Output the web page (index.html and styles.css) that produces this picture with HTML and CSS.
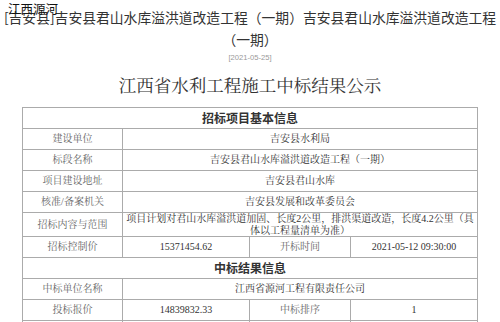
FILE: index.html
```html
<!DOCTYPE html>
<html lang="zh-CN">
<head>
<meta charset="utf-8">
<title>江西省水利工程施工中标结果公示</title>
<link rel="stylesheet" href="styles.css">
</head>
<body>
<div class="mark">江西源河</div>
<h1 class="title">[吉安县]吉安县君山水库溢洪道改造工程（一期）吉安县君山水库溢洪道改造工程（一期）</h1>
<div class="date">[2021-05-25]</div>
<h2 class="heading">江西省水利工程施工中标结果公示</h2>
<table class="info">
  <colgroup>
    <col class="c1"><col class="c2"><col class="c3"><col class="c4">
  </colgroup>
  <tr><td colspan="4" class="sec">招标项目基本信息</td></tr>
  <tr><td class="lab">建设单位</td><td colspan="3" class="val">吉安县水利局</td></tr>
  <tr><td class="lab">标段名称</td><td colspan="3" class="val">吉安县君山水库溢洪道改造工程（一期）</td></tr>
  <tr><td class="lab">项目建设地址</td><td colspan="3" class="val">吉安县君山水库</td></tr>
  <tr><td class="lab">核准/备案机关</td><td colspan="3" class="val">吉安县发展和改革委员会</td></tr>
  <tr class="tall"><td class="lab">招标内容与范围</td><td colspan="3" class="val multi">项目计划对君山水库溢洪道加固、长度2公里，排洪渠道改造，长度4.2公里（具体以工程量清单为准）</td></tr>
  <tr><td class="lab">招标控制价</td><td class="val">15371454.62</td><td class="lab">开标时间</td><td class="val">2021-05-12 09:30:00</td></tr>
  <tr><td colspan="4" class="sec">中标结果信息</td></tr>
  <tr><td class="lab">中标单位名称</td><td colspan="3" class="val">江西省源河工程有限责任公司</td></tr>
  <tr><td class="lab">投标报价</td><td class="val">14839832.33</td><td class="lab">中标排序</td><td class="val">1</td></tr>
  <tr><td class="lab">项目负责人</td><td class="val">张伟</td><td class="lab">中标工期</td><td class="val">365日历天</td></tr>
</table>
</body>
</html>
```
FILE: styles.css
```css
html, body {
  margin: 0;
  padding: 0;
  background: #fff;
}
body {
  position: relative;
  width: 500px;
  color: #333;
  font-family: "Noto Sans CJK SC", "Noto Sans", sans-serif;
  text-spacing-trim: space-all;
}
.mark {
  position: absolute;
  left: 8px;
  top: 1px;
  font-size: 12.5px;
  line-height: 16px;
  color: #111;
  font-family: "Noto Sans CJK SC", sans-serif;
}
.title {
  margin: 7px 0 0;
  font-size: 13.8px;
  font-weight: normal;
  line-height: 21.5px;
  text-align: center;
  color: #333;
}
.date {
  font-size: 7.6px;
  line-height: 15px;
  color: #999;
  text-align: center;
  font-family: "Liberation Sans", sans-serif;
}
.heading {
  margin: 9px 0 0;
  font-size: 17.5px;
  font-weight: normal;
  line-height: 24px;
  text-align: center;
  color: #333;
  font-family: "Liberation Serif", "Noto Serif CJK SC", serif;
}
.info {
  margin: 9px 0 0 22px;
  width: 455px;
  border-collapse: collapse;
  table-layout: fixed;
  font-family: "Liberation Serif", "Noto Serif CJK SC", serif;
  font-size: 10px;
}
.c1 { width: 100px; }
.c2 { width: 127px; }
.c3 { width: 101px; }
.c4 { width: 127px; }
.info tr { height: 21px; }
.info tr.tall { height: 24px; }
.info td {
  border: 1px solid #ababab;
  padding: 0 2px;
  text-align: center;
  vertical-align: middle;
  line-height: 12px;
}
.info td.sec {
  font-family: "Noto Sans CJK SC", sans-serif;
  font-weight: bold;
  font-size: 12px;
  color: #333;
}
.info td.lab {
  color: #666;
}
.info td.val {
  color: #333;
}
.info td.multi {
  line-height: 11.5px;
}
```
